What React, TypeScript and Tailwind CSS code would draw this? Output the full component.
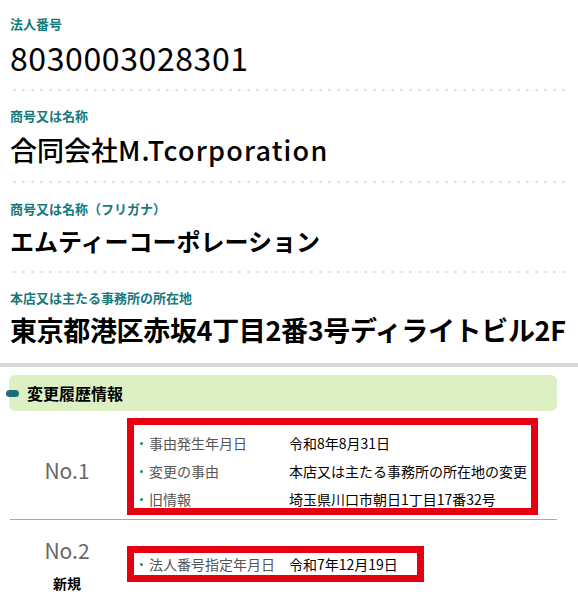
import React from 'react';

const font = { fontFamily: '"Noto Sans CJK JP", "Noto Sans", sans-serif' };

function Dots() {
  return <div className="mx-[10px] h-[2px] bg-[radial-gradient(circle,#d4d4d4_1px,transparent_1.2px)] bg-[length:9px_2px]" />;
}

function Label({ children }: { children: React.ReactNode }) {
  return <div className="text-[13px] leading-5 font-bold text-[#16797c]">{children}</div>;
}

const history = [
  { label: '事由発生年月日', value: '令和8年8月31日' },
  { label: '変更の事由', value: '本店又は主たる事務所の所在地の変更' },
  { label: '旧情報', value: '埼玉県川口市朝日1丁目17番32号' },
];

function Row({ label, value }: { label: string; value: string }) {
  return (
    <div className="flex items-center leading-[28px] text-[14px]">
      <span className="ml-[6px] w-[3px] h-[3px] rounded-full bg-[#1f8f6a]" />
      <span className="ml-[6px] w-[140px] text-[#555]">{label}</span>
      <span className="text-black whitespace-nowrap">{value}</span>
    </div>
  );
}

export default function App() {
  return (
    <div className="w-[578px] h-[600px] overflow-hidden bg-white text-black" style={font}>
      {/* 基本情報 */}
      <div className="px-[10px] pt-[14px] pb-[12px]">
        <Label>法人番号</Label>
        <div className="mt-[3px] text-[32px] leading-[40px] tracking-[0.6px]">8030003028301</div>
      </div>
      <Dots />
      <div className="px-[10px] pt-[15px] pb-[13px]">
        <Label>商号又は名称</Label>
        <div className="mt-[6px] text-[27px] leading-[36px] font-medium">
          合同会社<span className="tracking-[1.2px]">M.Tcorporation</span>
        </div>
      </div>
      <Dots />
      <div className="px-[10px] pt-[16px] pb-[13px]">
        <Label>商号又は名称（フリガナ）</Label>
        <div className="mt-[5px] text-[24px] leading-[34px] font-bold">エムティーコーポレーション</div>
      </div>
      <Dots />
      <div className="px-[10px] pt-[15px] pb-[15px]">
        <Label>本店又は主たる事務所の所在地</Label>
        <div className="mt-[4px] text-[27px] leading-[36px] font-bold tracking-[-0.35px] whitespace-nowrap">
          東京都港区赤坂4丁目2番3号ディライトビル2F
        </div>
      </div>
      <div className="h-[4px] bg-[#d8d8d8]" />

      {/* 変更履歴情報 */}
      <div className="mt-[8px] ml-[9px] mr-[21px] h-[36px] rounded-[6px] bg-[#ddf0c4] flex items-center">
        <span className="-ml-[3px] w-[13px] h-[7px] rounded-full bg-[#1d6e78]" />
        <span className="ml-[8px] text-[16px] font-bold leading-6">変更履歴情報</span>
      </div>

      <div className="flex pt-[7px] pl-[10px]">
        <div className="w-[114px] mr-[3px] pt-[40px] text-center text-[21px] leading-6 text-[#666]">No.1</div>
        <div className="w-[411px] h-[97px] border-[7px] border-[#e60012] pt-[4px]">
          {history.map((h) => (
            <Row key={h.label} label={h.label} value={h.value} />
          ))}
        </div>
      </div>
      <div className="mt-[4px] ml-[10px] mr-[21px] h-px bg-[#74c7a3]" />

      <div className="flex pl-[10px]">
        <div className="w-[114px] mr-[3px] pt-[18px] text-center">
          <div className="text-[21px] leading-6 text-[#666]">No.2</div>
          <div className="mt-[11px] text-[14px] leading-5 font-bold">新規</div>
        </div>
        <div className="mt-[26px] w-[297px] h-[36px] border-[7px] border-[#e60012] flex items-center">
          <Row label="法人番号指定年月日" value="令和7年12月19日" />
        </div>
      </div>
    </div>
  );
}
